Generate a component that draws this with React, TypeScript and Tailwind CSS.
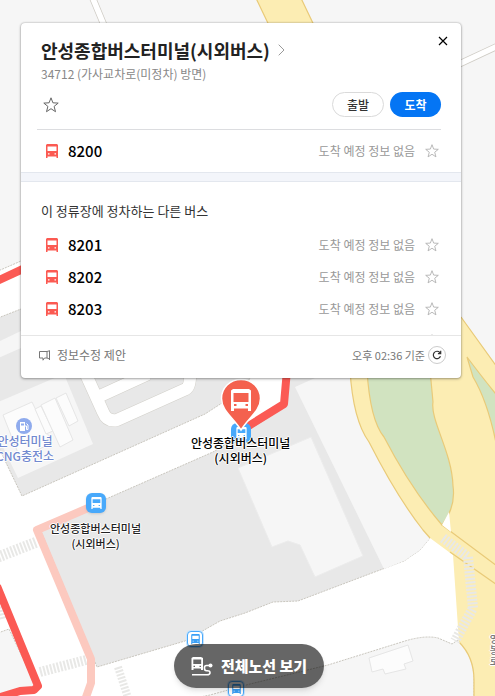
import type { ReactNode } from "react";

interface BusRowProps {
  number: string;
}

const otherBuses = ["8201", "8202", "8203"];

const BusIcon = ({ className }: { className: string }) => (
  <svg viewBox="0 0 12 14" className={className} fill="currentColor" aria-hidden="true">
    <path
      fillRule="evenodd"
      d="M1 0h10l1 1v13h-1.500v-1.500h-9V14H0V1zM1.500 2.500V7h9V2.500zM2 9.300v1.200h1.500V9.300zm6.500 0v1.200H10V9.300z"
    />
  </svg>
);

const StarIcon = ({ className }: { className: string }) => (
  <svg viewBox="0 0 16 16" className={className} fill="none" stroke="currentColor" aria-hidden="true">
    <path d="M8 .8l1.900 5 5.300.3-4.100 3.300 1.400 5.300L8 11.700l-4.500 3 1.400-5.300L.8 6.100l5.300-.3z" />
  </svg>
);

const BusRow = ({ number }: BusRowProps) => (
  <li className="flex h-8 items-center pl-[5px] pr-0.5">
    <BusIcon className="h-3.5 w-3 text-[#fb5a52]" />
    <span className="ml-[10px] text-[15px] font-medium text-black">{number}</span>
    <span className="ml-auto text-xs text-[#999]">도착 예정 정보 없음</span>
    <button type="button" aria-label={`${number} 즐겨찾기`} className="ml-[10px] text-[#b0b0b0]">
      <StarIcon className="h-3.5 w-3.5" />
    </button>
  </li>
);

const MapBackground = () => (
  <svg
    viewBox="0 0 495 696"
    preserveAspectRatio="xMinYMin slice"
    className="absolute inset-0 h-full w-full"
    aria-hidden="true"
  >
    <rect width="495" height="696" fill="#fff" />

    {/* blocks */}
    <g stroke="#c9c6be" strokeWidth="1" strokeDasharray="2 1">
      <path d="M-2 -2H497V400H340L180 200L21 261L-2 271z" fill="#f6f6f6" />
      <path d="M-2 318L21 309L110 270H260L250 378Q245 388 222 403L205 414L22 496L-2 446z" fill="#e8e8e8" />
      <path d="M40 529L106 499L213 452L249 430L283 408L290 360H352L430 538L420 550L404 561L372 573L298 601L273 602L245 613L220 621L185 641L97 667z" fill="#e8e8e8" />
      <path d="M170 703L210 695L250 684L328 665L405 641Q425 635 438 638L452 644L458 640Q474 655 474 680V698H170z" fill="#f6f6f6" />
      <path d="M-2 633L9 629L38 690L-2 698z" fill="#f6f6f6" />
    </g>
    <path d="M-2 342L21 331V348L-2 358z" fill="#f6f6f6" />
    <path d="M295 387L315 378H352Q354 420 368 440L430 538L420 550L404 561L384 569z" fill="#f6f6f6" />
    <path d="M311 437L363 556L315 577L300 545L288 541L272 547L238 468z" fill="#f6f6f6" stroke="#ececec" />
    <path d="M-2 402L64 374L93 444L18 478L-2 437z" fill="#f6f6f6" />

    {/* buildings */}
    <g fill="#fcfcfc" stroke="#e6e6e6">
      <path d="M3 415L32 402L52 443L20 458z" />
      <path d="M35 409L41 406L53 431L46 434z" />
      <path d="M41 405L55 398L73 440L60 447z" />
      <path d="M56 398L66 393L78 421L69 426z" />
      <path d="M369 658L408 645L413 661L404 664L406 669L385 674L383 669L372 672z" />
    </g>

    {/* bus parking lanes */}
    <g fill="none" strokeLinejoin="round">
      <path d="M84 370L103 412Q107 422 117 420L186 389Q191 386 190 370M100 396L148 374" stroke="#d2d0ca" strokeWidth="13" />
      <path d="M84 370L103 412Q107 422 117 420L186 389Q191 386 190 370M100 396L148 374" stroke="#fff" strokeWidth="12" />
    </g>

    {/* narrow roads above */}
    <g fill="none">
      <path d="M91 -6L106 30M455 66L500 45" stroke="#cfccc5" strokeWidth="7" />
      <path d="M91 -6L106 30M455 66L500 45" stroke="#fff" strokeWidth="5.5" />
    </g>

    {/* main road */}
    <g fill="#fcedb3" stroke="#e9ca78" strokeWidth="1.2">
      <path d="M254 -6L276 40H321L299 -6z" />
      <path d="M350 370Q353 420 369 442Q397 497 423 530L430 538L453 555L459 642Q474 657 474 680V700H500V371L461 317L440 290H340z" stroke="none" />
      <path d="M350 370Q353 420 369 442Q397 497 423 530L430 538M459 642Q474 657 474 680V698M461 317L497 367" fill="none" />
      <path d="M367 370Q370 420 384 437Q411 489 442 525Q456 507 453 486C452 452 430 420 433 402L430 370z" fill="#d1e3c0" />
      <path d="M467 357Q485 381 500 399V465Q491 407 473 377z" fill="#d1e3c0" />
      <path d="M442 525L497 566M450 552L497 585" fill="none" />
    </g>
    <path d="M442 525L449 512L451 532z" fill="#fff" />

    {/* crosswalks */}
    <g fill="none" stroke="#e8e8e6" strokeDasharray="2 1.5">
      <path d="M-2 557L37 542" strokeWidth="11" />
      <path d="M40 672L86 660" strokeWidth="10" />
      <path d="M118 667L128 698" strokeWidth="8" />
      <path d="M0 603L4 620" strokeWidth="9" />
      <path d="M443 538L468 557L473 608L455 641" strokeWidth="10" />
    </g>

    {/* routes */}
    <g fill="none" strokeWidth="8" strokeLinejoin="round">
      <path d="M95 505L37 530L91 659V683L85 700" stroke="#fcc9bf" />
      <path d="M-3 281L25 268M-3 586L38 686L34 690L20 691L-3 698M242 430L284 404L287 370" stroke="#fb5a54" />
    </g>
  </svg>
);

const StopMarker = ({ className }: { className: string }) => (
  <div className={`absolute flex items-center justify-center rounded-md bg-[#48a9fb] text-white ${className}`}>
    <BusIcon className="h-3 w-[11px]" />
  </div>
);

const SmallStopMarker = ({ className }: { className: string }) => (
  <div className={`absolute flex h-4 w-4 items-center justify-center rounded border border-[#48a9fb] bg-white text-[#3ba0f6] ring-1 ring-[#c9e4fc] ${className}`}>
    <BusIcon className="h-2.5 w-[9px]" />
  </div>
);

const MapLabel = ({ className, children }: { className: string; children: ReactNode }) => (
  <p
    className={`absolute whitespace-nowrap text-center font-medium [text-shadow:1px_0_#fff,-1px_0_#fff,0_1px_#fff,0_-1px_#fff] ${className}`}
  >
    {children}
  </p>
);

const DestinationPin = () => (
  <svg viewBox="0 0 42 54" className="absolute left-[220px] top-[378px] h-[54px] w-[42px]" aria-hidden="true">
    <path
      d="M21 1.5C10 1.5 1.5 10 1.5 20.5C1.5 33 14 40 21 52C28 40 40.5 33 40.5 20.5C40.5 10 32 1.5 21 1.5z"
      fill="#f4614e"
      stroke="#fff"
      strokeWidth="1.5"
    />
    <path
      d="M13 11h16l2 1.500V33h-3v-2.500H14V33h-3V12.500zM13.500 15v9h15v-9zM14 26v2h2.500v-2zm11.500 0v2H28v-2z"
      fill="#fff"
      fillRule="evenodd"
    />
  </svg>
);

const StopCard = () => (
  <section className="relative rounded bg-white shadow-[0_0_2px_rgba(0,0,0,0.3),0_1px_3px_rgba(0,0,0,0.3)]">
    <header className="flex h-[59px] items-start justify-between pl-5 pr-3 pt-[15px]">
      <div>
        <h1 className="text-lg font-bold leading-6 text-[#222]">
          <a href="#stop" className="flex items-center gap-2">
            안성종합버스터미널(시외버스)
            <svg viewBox="0 0 7 12" className="h-3 w-[7px]" fill="none" stroke="#999" aria-hidden="true">
              <path d="M.7 .7L6 6L.7 11.3" />
            </svg>
          </a>
        </h1>
        <p className="text-xs leading-6 text-[#888]">34712 (가사교차로(미정차) 방면)</p>
      </div>
      <button type="button" aria-label="닫기" className="mt-[-3px] flex h-3 w-3 items-center justify-center text-black">
        <svg viewBox="0 0 10 10" className="h-2.5 w-2.5" fill="none" stroke="currentColor" strokeWidth="1.2">
          <path d="M1 1L9 9M9 1L1 9" />
        </svg>
      </button>
    </header>

    <div className="ml-4 mr-5 flex h-12 items-center gap-1.5 border-b border-[#dcdde0] pb-1.5 pl-1.5 pt-1">
      <button type="button" aria-label="정류장 즐겨찾기" className="mr-auto text-[#666]">
        <StarIcon className="h-4 w-4" />
      </button>
      <button type="button" className="h-[25px] w-[52px] rounded-full border border-[#dadada] text-xs font-medium text-[#333]">
        출발
      </button>
      <button type="button" className="h-[25px] w-[51px] rounded-full bg-[#0475f4] text-xs font-bold text-white">
        도착
      </button>
    </div>

    <ul className="px-5 py-[5px]">
      <BusRow number="8200" />
    </ul>

    <div className="h-[10px] border-y border-[#e3e7ee] bg-[#f3f5fa]" />

    <div className="h-[153px] overflow-hidden px-5 pt-[19px]">
      <h2 className="mb-2 text-[13px] leading-5 text-[#333]">이 정류장에 정차하는 다른 버스</h2>
      <ul>
        {otherBuses.map((number) => (
          <BusRow key={number} number={number} />
        ))}
        <li className="flex h-8 items-center justify-end pr-0.5 text-[#b0b0b0]">
          <StarIcon className="h-3.5 w-3.5" />
        </li>
      </ul>
    </div>

    <footer className="flex h-[43px] items-center border-t border-[#e6e6e6] pb-1 pl-[18px] pr-[15px] text-[#777]">
      <button type="button" className="flex items-center gap-[7px] text-xs">
        <svg viewBox="0 0 11 11" className="h-[11px] w-[11px]" fill="none" stroke="currentColor" aria-hidden="true">
          <path d="M.5 1.500H8v6.500H5.500L4 10.200V8H.5zM10.500 .5V10M8 1.500L10.500 .8M8 8L10.500 9" />
        </svg>
        정보수정 제안
      </button>
      <span className="ml-auto text-[11px]">오후 02:36 기준</span>
      <button
        type="button"
        aria-label="새로고침"
        className="ml-[3px] flex h-[18px] w-[18px] items-center justify-center rounded-full border border-[#ccc] text-[#333]"
      >
        <svg viewBox="0 0 10 10" className="h-2.5 w-2.5" fill="none" stroke="currentColor" strokeWidth="1.2">
          <path d="M8.500 6.300A3.700 3.700 0 1 1 7.800 2.500L8.600 3.500M8.700 .8V3.600H5.900" />
        </svg>
      </button>
    </footer>
  </section>
);

const App = () => {
  return (
    <main className="relative flex min-h-screen flex-col overflow-hidden pb-2 pl-[21px] pr-[34px] pt-[23px] font-['Noto_Sans_CJK_KR',sans-serif]">
      <MapBackground />

      <div className="absolute left-4 top-[418px] flex h-4 w-4 items-center justify-center rounded-full bg-[#8fabed] text-white">
        <svg viewBox="0 0 10 9" className="h-[9px] w-2.5" fill="currentColor" aria-hidden="true">
          <path fillRule="evenodd" d="M1 0h5v9H1zM2 1.500v2h3v-2z" />
          <path d="M6 4h1.500v3.500h1.500V3L7.500 1.500" fill="none" stroke="currentColor" />
        </svg>
      </div>
      <MapLabel className="-left-1 top-[433px] text-xs leading-[15px] text-[#7189cf]">
        안성터미널
        <br />
        CNG충전소
      </MapLabel>

      <StopMarker className="left-[86px] top-[493px] h-5 w-5 shadow" />
      <MapLabel className="left-[50px] top-[521px] text-[11px] leading-[15px] text-[#222]">
        안성종합버스터미널
        <br />
        (시외버스)
      </MapLabel>

      <StopMarker className="left-[231px] top-[423px] h-5 w-5" />
      <DestinationPin />
      <MapLabel className="left-[191px] top-[435px] text-xs leading-[15px] text-black">
        안성종합버스터미널
        <br />
        (시외버스)
      </MapLabel>

      <SmallStopMarker className="left-[187px] top-[631px]" />
      <SmallStopMarker className="left-[228px] top-[681px]" />
      <MapLabel className="-right-1 top-[633px] text-[10px] leading-[11px] text-[#777]">
        영
        <br />봉
        <br />로
      </MapLabel>

      <StopCard />

      <button
        type="button"
        className="relative mt-auto ml-4 flex h-11 items-center gap-2 self-center rounded-full bg-black/60 px-[17px] text-[15px] font-extrabold text-white shadow-md"
      >
        <svg viewBox="0 0 22 19" className="h-[19px] w-[22px]" fill="none" stroke="currentColor" strokeWidth="1.6" aria-hidden="true">
          <path
            fill="currentColor"
            stroke="none"
            fillRule="evenodd"
            d="M2 0h8l2 1v12h-2v-1.500H2.500V13H.500V1zM2.300 2.500V7h7.900V2.500zM2.500 8.700V10H4V8.700zm6 0V10H10V8.700z"
          />
          <path d="M1 17.700H16Q19 17.700 19 15.700T16.500 13.700H15.500Q13.500 13.700 13.500 11.500V10.500Q13.500 8.500 15.500 8.500H20" />
          <circle cx="19.500" cy="8.500" r="2" fill="currentColor" stroke="none" />
        </svg>
        전체노선 보기
      </button>
    </main>
  );
};

export default App;
